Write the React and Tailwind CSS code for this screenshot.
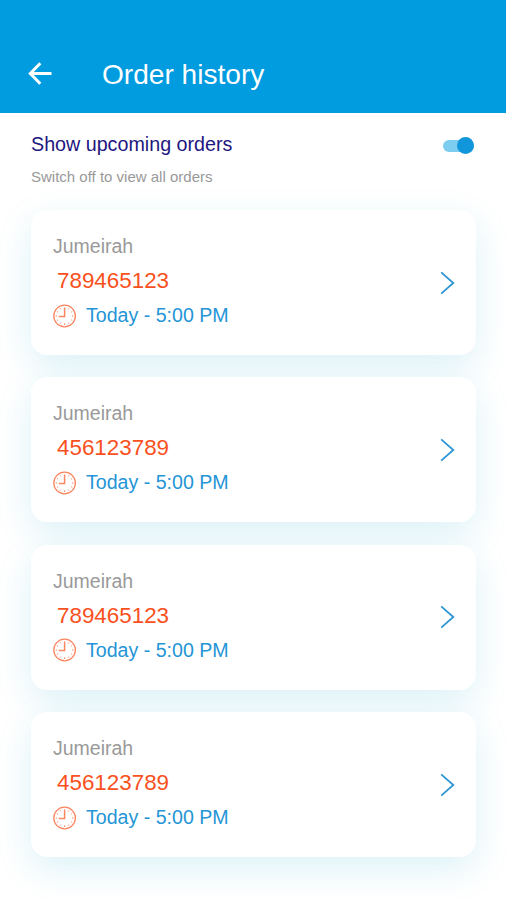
import React, { useState } from "react";

const orders = [
  { id: 1, area: "Jumeirah", number: "789465123", time: "Today - 5:00 PM" },
  { id: 2, area: "Jumeirah", number: "456123789", time: "Today - 5:00 PM" },
  { id: 3, area: "Jumeirah", number: "789465123", time: "Today - 5:00 PM" },
  { id: 4, area: "Jumeirah", number: "456123789", time: "Today - 5:00 PM" },
];

const BackArrow = () => (
  <svg width="24" height="24" viewBox="0 0 24 24" fill="none">
    <path
      d="M23.5 11.5H3M12.3 1.3L2.3 11.5l10 10.2"
      stroke="#fff"
      strokeWidth="3"
    />
  </svg>
);

const ClockIcon = () => (
  <svg width="24" height="24" viewBox="0 0 24 24" fill="none" stroke="#fb8660">
    <circle cx="11.6" cy="12" r="10.8" strokeWidth="1.3" />
    <path d="M11.6 3.4V12.5H5.8" strokeWidth="1.5" />
    <path
      d="M15.9 4.4l-.6 1M19.2 7.6l-1 .6M20.5 12h-1.5M19.2 16.4l-1-.6M15.9 19.6l-.6-1M11.6 21v-1.7M7.2 19.6l.6-1M4 16.4l1-.6M2.6 12h1.4M4 7.6l1 .6M7.2 4.4l.6 1"
      strokeWidth="1"
    />
  </svg>
);

const Chevron = () => (
  <svg width="16" height="24" viewBox="0 0 16 24" fill="none">
    <path d="M2.2 1.3L14.3 12 2.2 22.7" stroke="#2e96d5" strokeWidth="1.8" />
  </svg>
);

const OrderCard = ({ order }) => (
  <li className="flex h-[145px] items-center justify-between rounded-2xl bg-white pl-[22px] pr-[21px] shadow-[0_12px_36px_rgba(0,160,195,0.14)]">
    <div className="flex flex-col pb-1">
      <div className="text-[19.5px] leading-[30px] text-[#999]">
        {order.area}
      </div>
      <div className="pl-1 pt-[5px] text-[22.4px] leading-[30px] text-[#f9511d]">
        {order.number}
      </div>
      <div className="flex items-center gap-[9px] pt-[5px] text-[19.6px] leading-[30px] text-[#2495d6]">
        <ClockIcon />
        <span className="pb-px leading-7">{order.time}</span>
      </div>
    </div>
    <Chevron />
  </li>
);

const App = () => {
  const [upcoming, setUpcoming] = useState(true);

  return (
    <div className="h-[900px] w-full overflow-hidden bg-white font-['Liberation_Sans',Arial,sans-serif]">
      <header className="flex h-[113px] items-center bg-[#019be0] pl-7 pt-[35px]">
        <button aria-label="Back">
          <BackArrow />
        </button>
        <h1 className="pl-[50px] pt-0.5 text-[28.1px] leading-9 text-white">
          Order history
        </h1>
      </header>
      <section className="flex justify-between pl-[31px] pr-8 pt-[17px]">
        <div>
          <div className="text-[19.7px] leading-7 text-[#221680]">
            Show upcoming orders
          </div>
          <div className="pt-[9px] text-[15px] leading-5 text-[#999]">
            Switch off to view all orders
          </div>
        </div>
        <button
          role="switch"
          aria-checked={upcoming}
          aria-label="Show upcoming orders"
          onClick={() => setUpcoming(!upcoming)}
          className={
            upcoming
              ? "mt-[9.5px] flex h-3 w-[31px] items-center justify-end rounded-full bg-[#7dcdf0]"
              : "mt-[9.5px] flex h-3 w-[31px] items-center justify-start rounded-full bg-gray-300"
          }
        >
          <span
            className={
              upcoming
                ? "h-[17px] w-[17px] rounded-full bg-[#1296db]"
                : "h-[17px] w-[17px] rounded-full bg-gray-400"
            }
          ></span>
        </button>
      </section>
      <ul className="flex flex-col gap-[22.4px] pl-[31px] pr-[30px] pt-[23px]">
        {orders.map((o) => (
          <OrderCard key={o.id} order={o} />
        ))}
      </ul>
    </div>
  );
};

export default App;
